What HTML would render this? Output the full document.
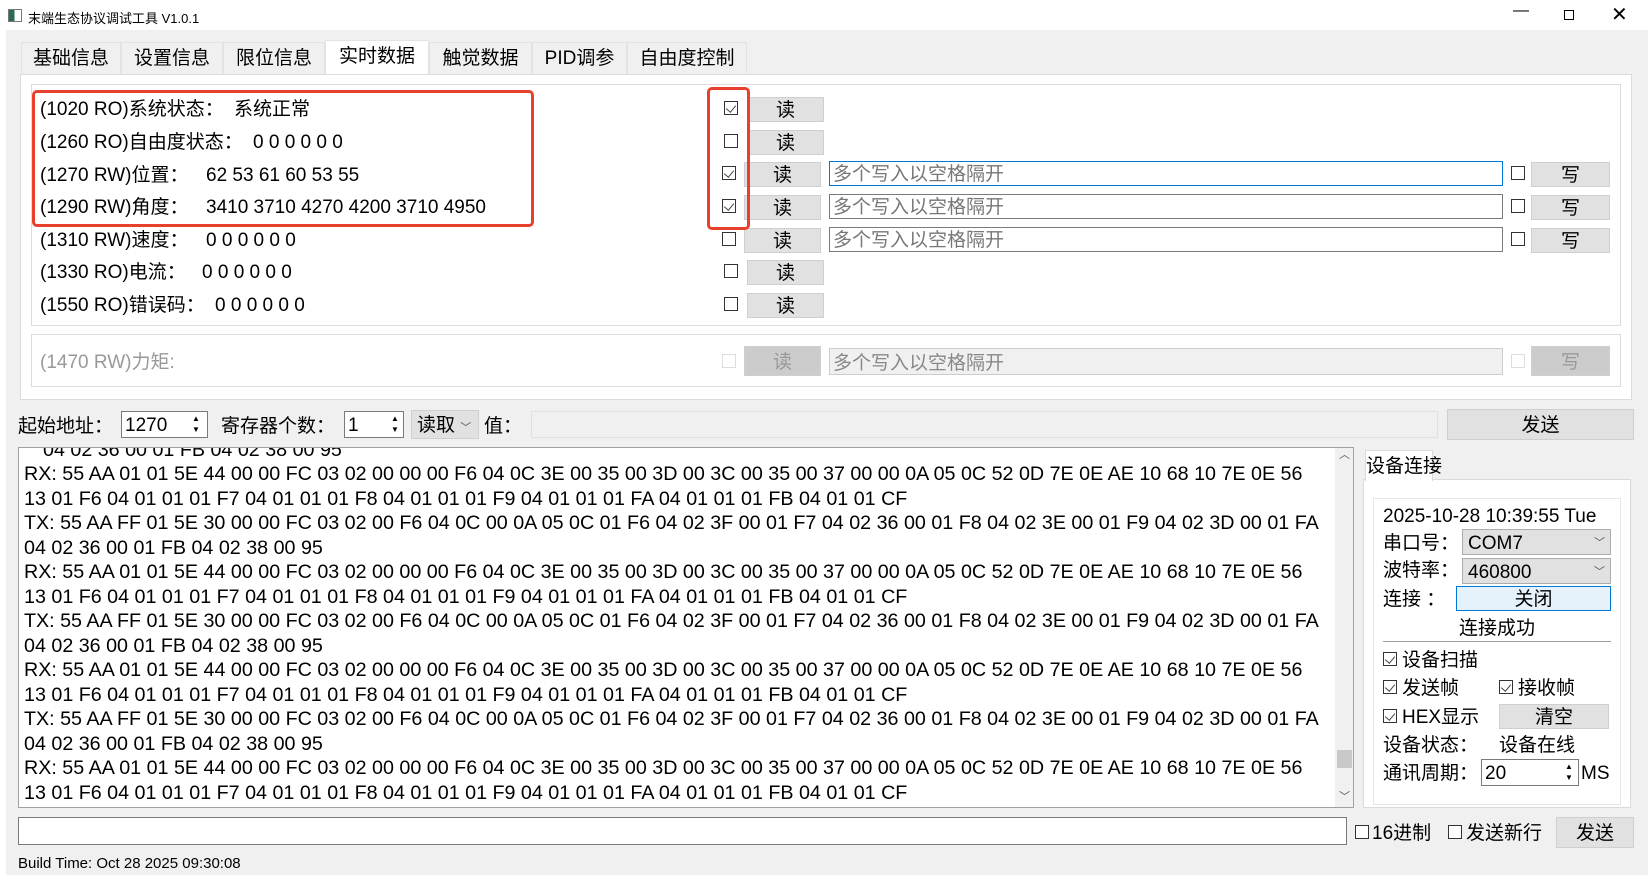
<!DOCTYPE html>
<html><head><meta charset="utf-8"><style>
*{box-sizing:border-box;margin:0;padding:0}
body{width:1650px;height:877px;background:#fff;position:relative;overflow:hidden;font-family:"Liberation Sans","Noto Sans CJK SC",sans-serif;font-size:19px;color:#000}
.a{position:absolute;white-space:nowrap}
.t{position:absolute;white-space:nowrap;line-height:24px;height:24px;margin-top:2px}
.cb{position:absolute;width:14px;height:14px;border:1px solid #333;background:#fff}
.cb.k::after{content:"";position:absolute;left:3px;top:1px;width:5px;height:8px;border:solid #444;border-width:0 1.3px 1.3px 0;transform:rotate(40deg)}
.btn{position:absolute;background:#e1e1e1;border:1px solid #cfcfcf;text-align:center;line-height:25px;height:25px}
.inp{position:absolute;background:#fff;border:1px solid #7a7a7a;height:25px;line-height:25px;padding-left:3px;color:#777}
.tab{position:absolute;top:42px;height:32px;background:#f0f0f0;border:1px solid #e3e3e3;border-bottom:none;line-height:32px;text-align:center}
.lg{position:absolute;left:24px;white-space:nowrap;line-height:24.5px;font-size:19.7px}
</style></head><body>
<div class="a" style="left:8px;top:9px;width:14px;height:13px;border:1px solid #777;background:linear-gradient(90deg,#2a6a5a 45%,#fff 45%)"></div>
<div class="a" style="left:28px;top:8px;font-size:13px">末端生态协议调试工具 V1.0.1</div>
<div class="a" style="left:1513px;top:2px;font-size:16px">—</div>
<div class="a" style="left:1564px;top:10px;width:10px;height:10px;border:1px solid #000"></div>
<div class="a" style="left:1611px;top:2px;font-size:20px">✕</div>
<div class="a" style="left:6px;top:30px;width:1642px;height:845px;background:#f0f0f0"></div>
<div class="tab" style="left:21px;width:100px">基础信息</div>
<div class="tab" style="left:121px;width:102px">设置信息</div>
<div class="tab" style="left:223px;width:102px">限位信息</div>
<div class="tab" style="left:325px;width:104px;background:#fff;top:40px;height:35px">实时数据</div>
<div class="tab" style="left:429px;width:103px">触觉数据</div>
<div class="tab" style="left:532px;width:95px">PID调参</div>
<div class="tab" style="left:627px;width:120px">自由度控制</div>
<div class="a" style="left:20px;top:74px;width:1612px;height:326px;background:#fff;border:1px solid #dcdcdc"></div>
<div class="a" style="left:31px;top:84px;width:1590px;height:242px;border:1px solid #dcdcdc"></div>
<div class="t" style="left:40px;top:96px">(1020 RO)系统状态：</div><div class="t" style="left:234px;top:96px">系统正常</div>
<div class="t" style="left:40px;top:129px">(1260 RO)自由度状态：</div><div class="t" style="left:253px;top:129px">0 0 0 0 0 0</div>
<div class="t" style="left:40px;top:162px">(1270 RW)位置：</div><div class="t" style="left:206px;top:162px">62 53 61 60 53 55</div>
<div class="t" style="left:40px;top:194px">(1290 RW)角度：</div><div class="t" style="left:206px;top:194px">3410 3710 4270 4200 3710 4950</div>
<div class="t" style="left:40px;top:227px">(1310 RW)速度：</div><div class="t" style="left:206px;top:227px">0 0 0 0 0 0</div>
<div class="t" style="left:40px;top:259px">(1330 RO)电流：</div><div class="t" style="left:202px;top:259px">0 0 0 0 0 0</div>
<div class="t" style="left:40px;top:292px">(1550 RO)错误码：</div><div class="t" style="left:215px;top:292px">0 0 0 0 0 0</div>
<div class="cb k" style="left:724px;top:101px"></div><div class="btn" style="left:747px;top:97px;width:77px">读</div>
<div class="cb" style="left:724px;top:134px"></div><div class="btn" style="left:747px;top:130px;width:77px">读</div>
<div class="cb k" style="left:722px;top:166px"></div><div class="btn" style="left:744px;top:162px;width:77px">读</div>
<div class="cb k" style="left:722px;top:199px"></div><div class="btn" style="left:744px;top:195px;width:77px">读</div>
<div class="cb" style="left:722px;top:232px"></div><div class="btn" style="left:744px;top:228px;width:77px">读</div>
<div class="cb" style="left:724px;top:264px"></div><div class="btn" style="left:747px;top:260px;width:77px">读</div>
<div class="cb" style="left:724px;top:297px"></div><div class="btn" style="left:747px;top:293px;width:77px">读</div>
<div class="inp" style="left:829px;top:161px;width:674px;border-color:#0078d7">多个写入以空格隔开</div>
<div class="inp" style="left:829px;top:194px;width:674px">多个写入以空格隔开</div>
<div class="inp" style="left:829px;top:227px;width:674px">多个写入以空格隔开</div>
<div class="cb" style="left:1511px;top:166px"></div><div class="btn" style="left:1531px;top:162px;width:79px">写</div>
<div class="cb" style="left:1511px;top:199px"></div><div class="btn" style="left:1531px;top:195px;width:79px">写</div>
<div class="cb" style="left:1511px;top:232px"></div><div class="btn" style="left:1531px;top:228px;width:79px">写</div>
<div class="a" style="left:32px;top:90px;width:502px;height:137px;border:3px solid #e8402c;border-radius:5px"></div>
<div class="a" style="left:707px;top:87px;width:43px;height:143px;border:3px solid #e8402c;border-radius:5px"></div>
<div class="a" style="left:31px;top:334px;width:1590px;height:53px;border:1px solid #dcdcdc"></div>
<div class="t" style="left:40px;top:349px;color:#999">(1470 RW)力矩:</div>
<div class="cb" style="left:722px;top:354px;border-color:#ddd"></div>
<div class="btn" style="left:744px;top:346px;width:77px;height:30px;line-height:31px;background:#ccc;color:#999">读</div>
<div class="inp" style="left:829px;top:348px;width:674px;height:27px;line-height:29px;background:#f0f0f0;border-color:#ccc;color:#888">多个写入以空格隔开</div>
<div class="cb" style="left:1511px;top:354px;border-color:#ddd"></div>
<div class="btn" style="left:1531px;top:346px;width:79px;height:30px;line-height:31px;background:#ccc;color:#999">写</div>
<div class="t" style="left:18px;top:413px">起始地址：</div>
<div class="inp" style="left:121px;top:411px;width:87px;height:27px;line-height:28px;color:#000">1270</div>
<div class="a" style="left:192px;top:413px;font-size:8px;line-height:11px">▲<br>▼</div>
<div class="t" style="left:221px;top:413px">寄存器个数：</div>
<div class="inp" style="left:344px;top:411px;width:60px;height:27px;line-height:28px;color:#000">1</div>
<div class="a" style="left:391px;top:413px;font-size:8px;line-height:11px">▲<br>▼</div>
<div class="btn" style="left:411px;top:410px;width:68px;height:29px;line-height:30px;text-align:left;padding-left:5px">读取 <span style="font-size:11px;color:#555">﹀</span></div>
<div class="t" style="left:484px;top:413px">值：</div>
<div class="a" style="left:531px;top:411px;width:907px;height:27px;background:#f0f0f0;border:1px solid #e0e0e0"></div>
<div class="btn" style="left:1447px;top:409px;width:187px;height:31px;line-height:32px">发送</div>
<div class="a" style="left:18px;top:447px;width:1336px;height:361px;background:#fff;border:1px solid #a0a0a0;overflow:hidden">
<div style="position:absolute;left:0;top:0;width:1316px;height:361px;overflow:hidden">
<div class="lg" style="top:-10px">04 02 36 00 01 FB 04 02 38 00 95</div>
<div class="lg" style="top:14px;left:5px">RX: 55 AA 01 01 5E 44 00 00 FC 03 02 00 00 00 F6 04 0C 3E 00 35 00 3D 00 3C 00 35 00 37 00 00 0A 05 0C 52 0D 7E 0E AE 10 68 10 7E 0E 56<br>13 01 F6 04 01 01 01 F7 04 01 01 01 F8 04 01 01 01 F9 04 01 01 01 FA 04 01 01 01 FB 04 01 01 CF<br>TX: 55 AA FF 01 5E 30 00 00 FC 03 02 00 F6 04 0C 00 0A 05 0C 01 F6 04 02 3F 00 01 F7 04 02 36 00 01 F8 04 02 3E 00 01 F9 04 02 3D 00 01 FA<br>04 02 36 00 01 FB 04 02 38 00 95<br>RX: 55 AA 01 01 5E 44 00 00 FC 03 02 00 00 00 F6 04 0C 3E 00 35 00 3D 00 3C 00 35 00 37 00 00 0A 05 0C 52 0D 7E 0E AE 10 68 10 7E 0E 56<br>13 01 F6 04 01 01 01 F7 04 01 01 01 F8 04 01 01 01 F9 04 01 01 01 FA 04 01 01 01 FB 04 01 01 CF<br>TX: 55 AA FF 01 5E 30 00 00 FC 03 02 00 F6 04 0C 00 0A 05 0C 01 F6 04 02 3F 00 01 F7 04 02 36 00 01 F8 04 02 3E 00 01 F9 04 02 3D 00 01 FA<br>04 02 36 00 01 FB 04 02 38 00 95<br>RX: 55 AA 01 01 5E 44 00 00 FC 03 02 00 00 00 F6 04 0C 3E 00 35 00 3D 00 3C 00 35 00 37 00 00 0A 05 0C 52 0D 7E 0E AE 10 68 10 7E 0E 56<br>13 01 F6 04 01 01 01 F7 04 01 01 01 F8 04 01 01 01 F9 04 01 01 01 FA 04 01 01 01 FB 04 01 01 CF<br>TX: 55 AA FF 01 5E 30 00 00 FC 03 02 00 F6 04 0C 00 0A 05 0C 01 F6 04 02 3F 00 01 F7 04 02 36 00 01 F8 04 02 3E 00 01 F9 04 02 3D 00 01 FA<br>04 02 36 00 01 FB 04 02 38 00 95<br>RX: 55 AA 01 01 5E 44 00 00 FC 03 02 00 00 00 F6 04 0C 3E 00 35 00 3D 00 3C 00 35 00 37 00 00 0A 05 0C 52 0D 7E 0E AE 10 68 10 7E 0E 56<br>13 01 F6 04 01 01 01 F7 04 01 01 01 F8 04 01 01 01 F9 04 01 01 01 FA 04 01 01 01 FB 04 01 01 CF</div>
</div>
<div style="position:absolute;left:1316px;top:0;width:19px;height:359px;background:#f0f0f0"></div>
<div style="position:absolute;left:1320px;top:-2px;font-size:11px;color:#555">︿</div>
<div style="position:absolute;left:1318px;top:302px;width:15px;height:18px;background:#c8c8c8"></div>
<div style="position:absolute;left:1320px;top:340px;font-size:11px;color:#555">﹀</div>
</div>
<div class="a" style="left:1363px;top:479px;width:268px;height:329px;background:#fff;border:1px solid #dadada"></div>
<div class="a" style="left:1365px;top:450px;width:68px;height:31px;background:#fff;border:1px solid #dadada;border-bottom:none;text-align:center;line-height:32px">设备连接</div>
<div class="a" style="left:1373px;top:498px;width:248px;height:307px;border:1px solid #e6e6e6"></div>
<div class="t" style="left:1383px;top:503px">2025-10-28 10:39:55 Tue</div>
<div class="t" style="left:1383px;top:530px">串口号：</div>
<div class="btn" style="left:1462px;top:529px;width:149px;height:26px;line-height:27px;text-align:left;padding-left:5px;border-color:#adadad">COM7<span style="position:absolute;right:5px;font-size:11px;color:#555">﹀</span></div>
<div class="t" style="left:1383px;top:557px">波特率：</div>
<div class="btn" style="left:1462px;top:558px;width:149px;height:26px;line-height:27px;text-align:left;padding-left:5px;border-color:#adadad">460800<span style="position:absolute;right:5px;font-size:11px;color:#555">﹀</span></div>
<div class="t" style="left:1383px;top:586px">连接 ：</div>
<div class="btn" style="left:1456px;top:586px;width:155px;background:#e5f1fb;border-color:#0078d7">关闭</div>
<div class="t" style="left:1459px;top:615px">连接成功</div>
<div class="a" style="left:1383px;top:641px;width:228px;height:1px;background:#a0a0a0"></div>
<div class="cb k" style="left:1383px;top:652px"></div><div class="t" style="left:1402px;top:647px">设备扫描</div>
<div class="cb k" style="left:1383px;top:680px"></div><div class="t" style="left:1402px;top:675px">发送帧</div>
<div class="cb k" style="left:1499px;top:680px"></div><div class="t" style="left:1518px;top:675px">接收帧</div>
<div class="cb k" style="left:1383px;top:709px"></div><div class="t" style="left:1402px;top:704px">HEX显示</div>
<div class="btn" style="left:1499px;top:704px;width:110px">清空</div>
<div class="t" style="left:1383px;top:732px">设备状态：</div><div class="t" style="left:1499px;top:732px">设备在线</div>
<div class="t" style="left:1383px;top:760px">通讯周期：</div>
<div class="inp" style="left:1481px;top:759px;width:98px;height:27px;line-height:28px;color:#000">20</div>
<div class="a" style="left:1565px;top:761px;font-size:8px;line-height:11px">▲<br>▼</div>
<div class="t" style="left:1581px;top:760px">MS</div>
<div class="a" style="left:18px;top:817px;width:1329px;height:28px;background:#fff;border:1px solid #7a7a7a"></div>
<div class="cb" style="left:1355px;top:825px"></div><div class="t" style="left:1372px;top:820px">16进制</div>
<div class="cb" style="left:1448px;top:825px"></div><div class="t" style="left:1466px;top:820px">发送新行</div>
<div class="btn" style="left:1556px;top:817px;width:78px;height:31px;line-height:32px">发送</div>
<div class="a" style="left:18px;top:855px;font-size:15px">Build Time: Oct 28 2025 09:30:08</div>
</body></html>
